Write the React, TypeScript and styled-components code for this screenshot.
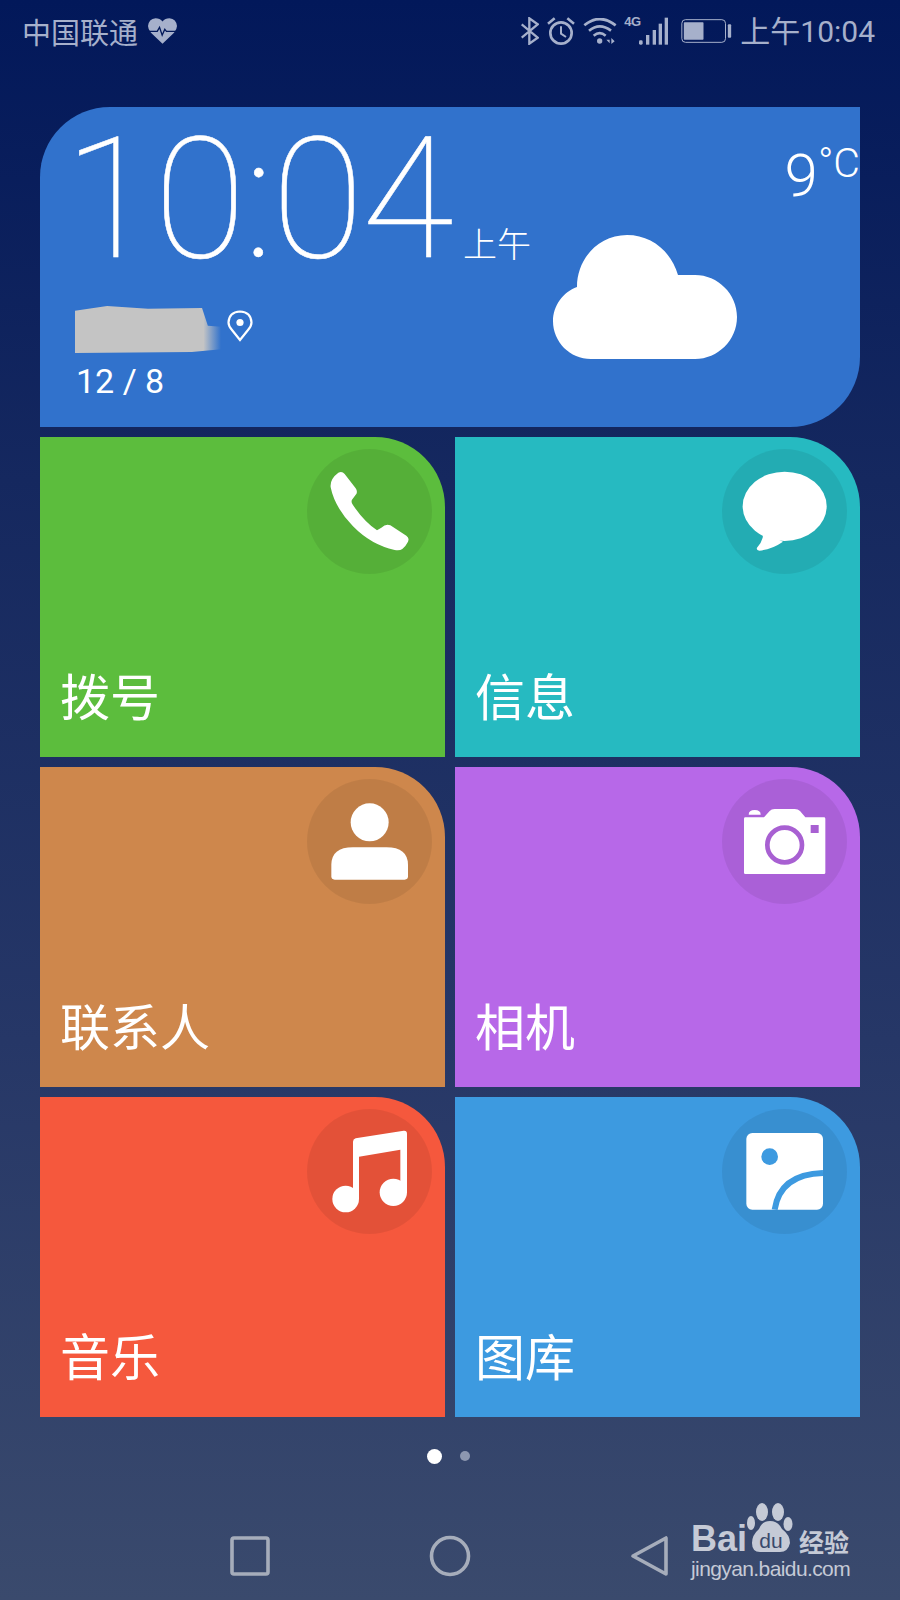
import React from "react";
import styled, { createGlobalStyle } from "styled-components";

const CJK = `"Noto Sans CJK SC", sans-serif`;
const LATIN = `Roboto, "Noto Sans CJK SC", sans-serif`;
const STATUS = "#a6b0cb";

const GlobalStyle = createGlobalStyle`
  html, body {
    margin: 0;
    padding: 0;
  }
`;

interface TileData {
  label: string;
  color: string;
  icon: React.ReactNode;
}

const PhoneIcon = () => (
  <BadgeSvg viewBox="52 60 375 375">
    <path
      fill="#fff"
      d="M146 131 Q157 125 165 135 L198 178 Q206 190 197 199 L187 212 Q184 218 188 225 Q220 275 262 304 L275 296 Q288 284 302 289 L350 320 Q360 327 355 338 Q348 352 338 360 Q330 366 315 363 Q245 348 190 292 Q135 235 123 175 Q120 150 146 131 Z"
    />
  </BadgeSvg>
);

const MessageIcon = () => (
  <BadgeSvg viewBox="52 60 375 375">
    <ellipse cx="240" cy="232" rx="126" ry="104" fill="#fff" />
    <path
      fill="#fff"
      d="M176 310 L174 326 Q170 342 157 356 Q154 364 164 365 Q200 362 235 338 Z"
    />
  </BadgeSvg>
);

const PersonIcon = () => (
  <BadgeSvg viewBox="52 60 375 375">
    <circle cx="240" cy="190" r="57" fill="#fff" />
    <path
      fill="#fff"
      d="M125 352 L125 318 Q125 265 190 265 H290 Q355 265 355 318 V352 Q355 362 345 362 H135 Q125 362 125 352 Z"
    />
  </BadgeSvg>
);

const CameraIcon = ({ tint }: { tint: string }) => (
  <BadgeSvg viewBox="52 60 375 375">
    <path
      fill="#fff"
      d="M122 175 H178 L195 156 Q200 150 210 150 H270 Q280 150 286 156 L302 175 H358 Q362 175 362 179 V341 Q362 345 358 345 H122 Q118 345 118 341 V179 Q118 175 122 175 Z"
    />
    <path fill="#fff" d="M132 167 Q132 153 150 153 Q168 153 168 167 Z" />
    <circle cx="240" cy="258" r="52" fill="#fff" stroke={tint} strokeWidth="14" />
    <rect x="318" y="198" width="24" height="24" fill={tint} />
  </BadgeSvg>
);

const MusicIcon = () => (
  <BadgeSvg viewBox="52 60 375 375">
    <path
      fill="#fff"
      d="M190 158 Q190 150 198 148 L342 125 Q352 124 352 134 V310 H332 V182 L208 203 V330 H190 Z"
    />
    <circle cx="168" cy="330" r="40" fill="#fff" />
    <circle cx="311" cy="310" r="41" fill="#fff" />
  </BadgeSvg>
);

const GalleryIcon = ({ tint }: { tint: string }) => (
  <BadgeSvg viewBox="52 60 375 375">
    <rect x="125" y="132" width="230" height="230" rx="18" fill="#fff" />
    <circle cx="195" cy="203" r="25" fill={tint} />
    <path d="M210 362 Q226 256 355 252" fill="none" stroke={tint} strokeWidth="18" />
  </BadgeSvg>
);

const TILES: TileData[] = [
  { label: "拨号", color: "#5cbd3d", icon: <PhoneIcon /> },
  { label: "信息", color: "#26bac1", icon: <MessageIcon /> },
  { label: "联系人", color: "#ce874c", icon: <PersonIcon /> },
  { label: "相机", color: "#b768e8", icon: <CameraIcon tint="#a860d2" /> },
  { label: "音乐", color: "#f5583d", icon: <MusicIcon /> },
  { label: "图库", color: "#3d9ae0", icon: <GalleryIcon tint="#3d9ae0" /> },
];

const App = () => {
  return (
    <Page>
      <GlobalStyle />
      <StatusBar>
        <Carrier>
          <span>中国联通</span>
          <HeartSvg viewBox="447 52 88 78">
            <path
              fill={STATUS}
              d="M491 130 L456 96 Q447 86 447 76 Q449 54 470 52 Q483 52 491 62 Q499 52 512 52 Q533 54 535 76 Q535 86 526 96 Z"
            />
            <path
              fill="none"
              stroke="#03195a"
              strokeWidth="4"
              d="M447 92 H475 L482 80 L490 104 L498 86 L503 92 H535"
            />
          </HeartSvg>
        </Carrier>
        <StatusRight>
          <StatusSvg width={18} height={28} viewBox="60 50 54 84">
            <path
              fill="none"
              stroke={STATUS}
              strokeWidth="7"
              d="M62 72 L110 112 L85 130 V54 L110 72 L62 112"
            />
          </StatusSvg>
          <StatusSvg width={28} height={28} viewBox="143 50 84 84">
            <circle cx="185" cy="98" r="32" fill="none" stroke={STATUS} strokeWidth="8" />
            <path fill="none" stroke={STATUS} strokeWidth="6" d="M185 78 V100 L200 110" />
            <path fill="none" stroke={STATUS} strokeWidth="8" d="M146 70 L166 54 M224 70 L204 54" />
          </StatusSvg>
          <StatusSvg width={34} height={26} viewBox="248 50 102 78">
            <path fill="none" stroke={STATUS} strokeWidth="8" d="M252 72 Q298 34 346 72" />
            <path fill="none" stroke={STATUS} strokeWidth="8" d="M266 88 Q298 62 332 88" />
            <path fill="none" stroke={STATUS} strokeWidth="8" d="M280 103 Q298 88 316 103" />
            <circle cx="298" cy="119" r="8" fill={STATUS} />
            <path fill={STATUS} d="M318 115 L328 115 V126 Z M333 110 L343 120 L333 128 Z" />
          </StatusSvg>
          <Signal>
            <FourG>4G</FourG>
            <StatusSvg width={30} height={28} viewBox="415 46 90 84">
              <rect x="418" y="116" width="11" height="13" rx="4" fill={STATUS} />
              <rect x="439" y="100" width="10" height="29" fill={STATUS} />
              <rect x="459" y="85" width="10" height="44" fill={STATUS} />
              <rect x="477" y="66" width="10" height="63" fill={STATUS} />
              <rect x="495" y="48" width="10" height="81" fill={STATUS} />
            </StatusSvg>
          </Signal>
          <BatterySvg width={51} height={24} viewBox="545 56 152 72">
            <rect x="547" y="58" width="131" height="68" rx="11" fill="none" stroke={STATUS} strokeWidth="3" />
            <rect x="553" y="66" width="59" height="52" rx="2" fill={STATUS} />
            <rect x="685" y="72" width="10" height="40" rx="3" fill={STATUS} />
          </BatterySvg>
          <StatusTime>上午10:04</StatusTime>
        </StatusRight>
      </StatusBar>

      <Widget>
        <ClockColumn>
          <ClockRow>
            <BigTime>10:04</BigTime>
            <Meridiem>上午</Meridiem>
          </ClockRow>
          <LocationRow>
            <BlurredCity />
            <PinSvg viewBox="0 0 26 32">
              <path
                fill="none"
                stroke="#fff"
                strokeWidth="2.2"
                d="M13 30 L5 20 Q1.5 16 1.5 12.5 Q2 2 13 1.5 Q24 2 24.5 12.5 Q24.5 16 21 20 Z"
              />
              <circle cx="13" cy="12.5" r="3.6" fill="#fff" />
            </PinSvg>
          </LocationRow>
          <DateText>12 / 8</DateText>
        </ClockColumn>
        <WeatherColumn>
          <Temperature>
            9<sup>°C</sup>
          </Temperature>
          <CloudSvg viewBox="0 0 184 124">
            <path
              fill="#fff"
              d="M38 124 C17 124 0 107 0 86 C0 71 10 57 24 52 C24 23 46 0 74 0 C98 0 118 16 125 40 L142 40 C165 40 184 59 184 82 C184 105 165 124 142 124 Z"
            />
          </CloudSvg>
        </WeatherColumn>
      </Widget>

      <TileGrid>
        {TILES.map((tile) => (
          <Tile key={tile.label} $color={tile.color}>
            <Badge>{tile.icon}</Badge>
            <TileLabel>{tile.label}</TileLabel>
          </Tile>
        ))}
      </TileGrid>

      <PageDots>
        <Dot $active />
        <Dot />
      </PageDots>

      <NavBar>
        <NavSvg viewBox="0 0 42 42">
          <rect x="3" y="3" width="36" height="36" rx="2" fill="none" stroke="#a6adbb" strokeWidth="3.6" />
        </NavSvg>
        <NavSvg viewBox="0 0 42 42">
          <circle cx="21" cy="21" r="18.5" fill="none" stroke="#a6adbb" strokeWidth="3.6" />
        </NavSvg>
        <NavSvg viewBox="0 0 42 42">
          <path
            d="M37 3 V39 L4 21 Z"
            fill="none"
            stroke="#a6adbb"
            strokeWidth="3.6"
            strokeLinejoin="round"
          />
        </NavSvg>
      </NavBar>

      <Watermark>
        <BrandRow>
          <BrandBai>Bai</BrandBai>
          <PawSvg viewBox="0 0 46 52">
            <ellipse cx="15" cy="10" rx="6" ry="9" fill="#c5cad6" />
            <ellipse cx="31" cy="10" rx="6" ry="9" fill="#c5cad6" />
            <ellipse cx="4" cy="21" rx="4" ry="7" fill="#c5cad6" />
            <ellipse cx="41" cy="22" rx="4.5" ry="7" fill="#c5cad6" />
            <path
              fill="#c5cad6"
              d="M23 19 Q31 19 35 27 Q43 33 43 41 Q41 50 33 50 H13 Q5 50 5 41 Q5 33 12 27 Q15 19 23 19 Z"
            />
            <text x="24" y="46" textAnchor="middle" fontFamily="Liberation Sans" fontSize="21" fill="#39496c">
              du
            </text>
          </PawSvg>
          <BrandCn>经验</BrandCn>
        </BrandRow>
        <BrandUrl>jingyan.baidu.com</BrandUrl>
      </Watermark>
    </Page>
  );
};

const Page = styled.div`
  position: relative;
  display: flex;
  flex-direction: column;
  width: 900px;
  height: 1600px;
  overflow: hidden;
  background: linear-gradient(180deg, #02185a 0%, #15285f 30%, #263767 65%, #3a4a6d 100%);
`;

const StatusBar = styled.div`
  display: flex;
  justify-content: space-between;
  align-items: center;
  height: 62px;
  padding: 0 25px 0 22px;
  color: ${STATUS};
  flex-shrink: 0;
`;

const Carrier = styled.div`
  display: flex;
  align-items: center;
  gap: 10px;
  font-family: ${CJK};
  font-size: 29px;
`;

const HeartSvg = styled.svg`
  width: 29px;
  height: 26px;
`;

const StatusRight = styled.div`
  display: flex;
  align-items: center;
  gap: 8px;
`;

const StatusSvg = styled.svg`
  display: block;
  flex-shrink: 0;
`;

const Signal = styled.div`
  position: relative;
  display: flex;
  align-items: flex-end;
  margin-left: -2px;
  padding-left: 15px;
`;

const FourG = styled.span`
  position: absolute;
  left: 1px;
  top: -2px;
  font-family: "Liberation Sans", sans-serif;
  font-weight: 700;
  font-size: 13px;
  line-height: 14px;
  letter-spacing: -0.5px;
  color: ${STATUS};
`;

const BatterySvg = styled.svg`
  display: block;
  margin-left: 5px;
`;

const StatusTime = styled.span`
  font-family: ${LATIN};
  font-size: 30px;
  line-height: 36px;
  margin-top: 2px;
`;

const Widget = styled.div`
  display: flex;
  justify-content: space-between;
  height: 320px;
  margin: 45px 40px 0;
  border-radius: 70px 0 70px 0;
  background: #3172cc;
  color: #fff;
  flex-shrink: 0;
`;

const ClockColumn = styled.div`
  display: flex;
  flex-direction: column;
  padding: 0 0 0 24px;
`;

const ClockRow = styled.div`
  display: flex;
  align-items: flex-end;
  height: 185px;
`;

const BigTime = styled.div`
  width: 399px;
  font-family: Roboto, sans-serif;
  font-weight: 100;
  font-size: 168px;
  line-height: 185px;
  letter-spacing: -2px;
  white-space: nowrap;
  -webkit-text-stroke: 0.5px #fff;
`;

const Meridiem = styled.div`
  font-family: ${CJK};
  font-weight: 300;
  font-size: 34px;
  line-height: 40px;
  margin-bottom: 29px;
`;

const LocationRow = styled.div`
  display: flex;
  align-items: center;
  gap: 6px;
  margin-top: 14px;
  margin-left: 11px;
  height: 47px;
`;

const BlurredCity = styled.div`
  width: 146px;
  height: 47px;
  background: linear-gradient(90deg, #c4c4c4 0%, #c4c4c4 88%, #3172cc 100%);
  clip-path: polygon(0 10%, 22% 0, 50% 6%, 87% 4%, 91% 42%, 100% 44%, 100% 92%, 80% 98%, 0 100%);
`;

const PinSvg = styled.svg`
  width: 26px;
  height: 32px;
  margin-top: -8px;
`;

const DateText = styled.div`
  margin-top: 8px;
  margin-left: 12px;
  font-family: Roboto, sans-serif;
  font-size: 34px;
  line-height: 40px;
`;

const WeatherColumn = styled.div`
  display: flex;
  flex-direction: column;
  align-items: flex-end;
`;

const Temperature = styled.div`
  margin-top: 34px;
  height: 70px;
  font-family: Roboto, sans-serif;
  font-weight: 300;
  font-size: 60px;
  line-height: 70px;

  sup {
    font-size: 41px;
    font-weight: 300;
    line-height: 0;
    vertical-align: 19px;
  }
`;

const CloudSvg = styled.svg`
  width: 184px;
  height: 124px;
  margin-top: 24px;
  margin-right: 123px;
`;

const TileGrid = styled.div`
  display: grid;
  grid-template-columns: 405px 405px;
  grid-auto-rows: 320px;
  gap: 10px;
  margin: 10px 40px 0;
`;

const Tile = styled.div<{ $color: string }>`
  display: flex;
  flex-direction: column;
  padding: 12px 13px 35px 20px;
  border-radius: 0 70px 0 0;
  background: ${(p) => p.$color};
  color: #fff;
`;

const Badge = styled.div`
  align-self: flex-end;
  width: 125px;
  height: 125px;
  border-radius: 50%;
  background: rgba(0, 0, 0, 0.07);
`;

const BadgeSvg = styled.svg`
  display: block;
  width: 125px;
  height: 125px;
`;

const TileLabel = styled.div`
  margin-top: auto;
  font-family: ${CJK};
  font-size: 50px;
  line-height: 56px;
`;

const PageDots = styled.div`
  display: flex;
  justify-content: center;
  align-items: center;
  gap: 18px;
  height: 16px;
  margin-top: 31px;
  padding-right: 3px;
`;

const Dot = styled.div<{ $active?: boolean }>`
  width: ${(p) => (p.$active ? 15 : 10)}px;
  height: ${(p) => (p.$active ? 15 : 10)}px;
  border-radius: 50%;
  background: ${(p) => (p.$active ? "#fff" : "#8d97b0")};
`;

const NavBar = styled.div`
  display: flex;
  justify-content: center;
  gap: 158px;
  margin-top: 71px;
`;

const NavSvg = styled.svg`
  display: block;
  width: 42px;
  height: 42px;
`;

const Watermark = styled.div`
  position: absolute;
  left: 691px;
  top: 1503px;
  display: flex;
  flex-direction: column;
  color: #c5cad6;
`;

const BrandRow = styled.div`
  display: flex;
  align-items: flex-end;
  height: 51px;
`;

const BrandBai = styled.span`
  font-family: "Liberation Sans", sans-serif;
  font-weight: 700;
  font-size: 36px;
  line-height: 36px;
  margin-bottom: -3px;
`;

const PawSvg = styled.svg`
  width: 46px;
  height: 52px;
`;

const BrandCn = styled.span`
  font-family: ${CJK};
  font-weight: 700;
  font-size: 25px;
  line-height: 30px;
  margin-left: 6px;
  margin-bottom: -2px;
`;

const BrandUrl = styled.span`
  margin-top: 2px;
  font-family: "Liberation Sans", sans-serif;
  font-size: 21px;
  line-height: 26px;
  letter-spacing: -0.6px;
  white-space: nowrap;
`;

export default App;
